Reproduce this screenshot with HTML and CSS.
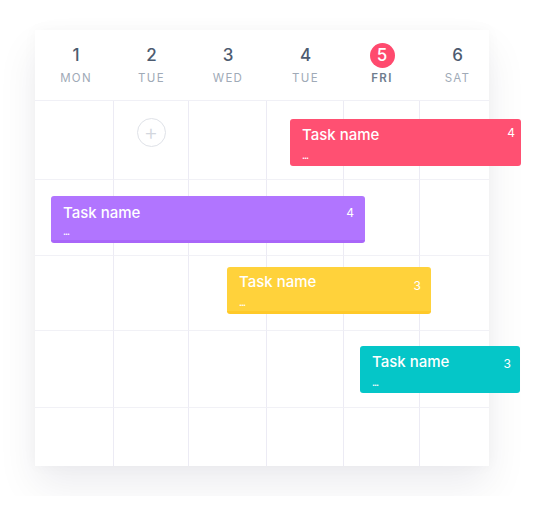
FILE: index.html
```html
<!DOCTYPE html>
<html lang="en">
<head>
    <meta charset="UTF-8">
    <meta name="viewport" content="width=device-width, initial-scale=1.0">
    <title>Week planner</title>
    <link rel="stylesheet" href="styles.css">
</head>
<body>
    <div class="page">
        <div class="board">
            <div class="days">
                <div class="day"><span class="num">1</span><span class="name">MON</span></div>
                <div class="day"><span class="num">2</span><span class="name">TUE</span></div>
                <div class="day"><span class="num">3</span><span class="name">WED</span></div>
                <div class="day"><span class="num">4</span><span class="name">TUE</span></div>
                <div class="day today"><span class="num">5</span><span class="name">FRI</span></div>
                <div class="day"><span class="num">6</span><span class="name">SAT</span></div>
            </div>

            <div class="grid">
                <div class="cell"></div><div class="cell"><span class="add">+</span></div><div class="cell"></div><div class="cell"></div><div class="cell"></div><div class="cell"></div>
                <div class="cell"></div><div class="cell"></div><div class="cell"></div><div class="cell"></div><div class="cell"></div><div class="cell"></div>
                <div class="cell"></div><div class="cell"></div><div class="cell"></div><div class="cell"></div><div class="cell"></div><div class="cell"></div>
                <div class="cell"></div><div class="cell"></div><div class="cell"></div><div class="cell"></div><div class="cell"></div><div class="cell"></div>
                <div class="cell"></div><div class="cell"></div><div class="cell"></div><div class="cell"></div><div class="cell"></div><div class="cell"></div>
            </div>

            <div class="task red">
                <span class="title">Task name</span><span class="count">4</span>
                <span class="more">...</span>
            </div>
            <div class="task purple">
                <span class="title">Task name</span><span class="count">4</span>
                <span class="more">...</span>
            </div>
            <div class="task yellow">
                <span class="title">Task name</span><span class="count">3</span>
                <span class="more">...</span>
            </div>
            <div class="task teal">
                <span class="title">Task name</span><span class="count">3</span>
                <span class="more">...</span>
            </div>
        </div>
    </div>
</body>
</html>
```

FILE: styles.css
```css
body {
    margin: 0;
    background-color: #fff;
    font-family: Inter, "Noto Sans", sans-serif;
}
.page {
    padding: 30px 35px;
}
.board {
    position: relative;
    width: 454px;
    background-color: #fff;
    box-shadow: 0 20px 38px rgba(20, 20, 50, 0.075), 0 0 14px rgba(20, 20, 50, 0.03);
}
.days,
.grid {
    display: grid;
    grid-template-columns: 79px 75px 78px 77px 76px 69px;
}
.days {
    height: 71px;
    border-bottom: 1px solid #f0f0f6;
    box-sizing: border-box;
}
.day {
    display: flex;
    flex-direction: column;
    align-items: center;
    padding-top: 13px;
}
.day:first-child {
    padding-left: 3px;
}
.day:last-child {
    padding-left: 6px;
}
.num {
    width: 25px;
    height: 25px;
    line-height: 25px;
    text-align: center;
    border-radius: 50%;
    font-size: 17px;
    font-weight: 500;
    color: #4d5b70;
}
.name {
    margin-top: 3px;
    font-size: 11.5px;
    letter-spacing: 1.3px;
    color: #a0aab7;
}
.today .num {
    background-color: #ff4a6e;
    color: #fff;
}
.today .name {
    color: #6f7c8e;
    font-weight: 600;
}
.grid {
    grid-template-rows: 79px 76px 75px 77px 58px;
}
.cell {
    border-right: 1px solid #ecebf4;
    border-bottom: 1px solid #f1f1f6;
    display: flex;
    justify-content: center;
    padding-top: 17px;
    box-sizing: border-box;
}
.cell:nth-child(6n) {
    border-right: none;
}
.cell:nth-last-child(-n+6) {
    border-bottom: none;
}
.add {
    width: 27px;
    height: 27px;
    border: 1px solid #dfe2e8;
    border-radius: 50%;
    text-align: center;
    line-height: 26px;
    font-size: 22px;
    font-weight: 300;
    color: #d3d7de;
}
.task {
    position: absolute;
    height: 47px;
    box-sizing: border-box;
    border-radius: 3px;
    color: #fff;
    padding: 6px 8px 0 12px;
    display: flex;
    flex-wrap: wrap;
    align-items: flex-start;
}
.title {
    flex: 1;
    font-size: 15px;
    font-weight: 500;
    line-height: 20px;
}
.count {
    font-size: 12px;
    line-height: 16px;
    margin-top: 2px;
}
.more {
    width: 100%;
    font-size: 9px;
    line-height: 10px;
    font-weight: 700;
    letter-spacing: -1px;
}
.red {
    left: 255px;
    top: 89px;
    width: 231px;
    background-color: #ff5072;
    padding-right: 6px;
}
.red .count {
    margin-top: 0;
}
.purple {
    left: 16px;
    top: 166px;
    width: 314px;
    background-color: #b175ff;
    border-bottom: 3px solid #a966f9;
    padding-top: 7px;
    padding-right: 11px;
}
.yellow {
    left: 192px;
    top: 237px;
    width: 204px;
    background-color: #ffd23b;
    border-bottom: 3px solid #ffc928;
    padding-top: 5px;
    padding-right: 10px;
}
.yellow .count {
    margin-top: 6px;
}
.teal {
    left: 325px;
    top: 316px;
    width: 160px;
    background-color: #05c6c8;
    padding-top: 6px;
    padding-right: 9px;
}
.teal .count {
    margin-top: 4px;
}
```
